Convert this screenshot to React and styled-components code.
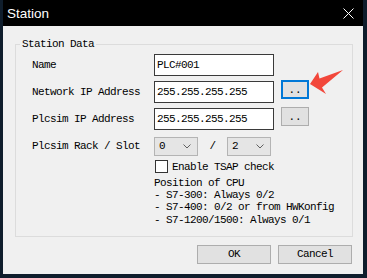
import { Fragment } from "react";
import styled, { createGlobalStyle } from "styled-components";

const GlobalStyle = createGlobalStyle`
  html, body {
    margin: 0;
    padding: 0;
    background: #0f1d2c;
  }
  body {
    width: 367px;
    height: 278px;
    overflow: hidden;
    font-family: "Liberation Mono", "DejaVu Sans Mono", monospace;
    font-size: 11px;
    letter-spacing: -0.6px;
    color: #000;
  }
`;

const Window = styled.div`
  position: relative;
  width: 360px;
  height: 274px;
  margin-left: 3px;
  background: #f0f0f0;
  display: flex;
  flex-direction: column;
`;

const TitleBar = styled.div`
  height: 26px;
  flex: none;
  background: #000;
  color: #fff;
  display: flex;
  align-items: center;
  justify-content: space-between;
  padding: 0 9px 0 4px;
  font-family: "Liberation Sans", Arial, sans-serif;
  font-size: 13.5px;
  letter-spacing: 0;
`;

const Body = styled.div`
  flex: 1;
  padding: 12px 10px 0 12px;
`;

const Group = styled.fieldset`
  margin: 0;
  padding: 0;
  border: 1px solid #dcdcdc;
  min-width: 0;
`;

const Legend = styled.legend`
  margin-left: 4px;
  padding: 0 2px;
  line-height: 12px;
`;

const GroupContent = styled.div`
  padding: 4px 0 10px 16px;
`;

const FormGrid = styled.div`
  display: grid;
  grid-template-columns: 115px 120px 28px;
  grid-auto-rows: 22px;
  column-gap: 7px;
  row-gap: 5px;
`;

const Label = styled.div`
  align-self: center;
  white-space: nowrap;
`;

const TextBox = styled.div`
  box-sizing: border-box;
  height: 22px;
  background: #fff;
  border: 1px solid #3a3a3a;
  padding-left: 2px;
  display: flex;
  align-items: center;
  white-space: nowrap;
`;

const SmallButton = styled.div`
  box-sizing: border-box;
  width: 28px;
  height: 19px;
  align-self: start;
  margin-top: -1px;
  background: #e1e1e1;
  border: ${(p) => (p.$focused ? "2px solid #0078d7" : "1px solid #adadad")};
  display: flex;
  align-items: center;
  justify-content: center;
  letter-spacing: 0;
`;

const ComboRow = styled.div`
  display: flex;
  align-items: center;
`;

const Combo = styled.div`
  box-sizing: border-box;
  width: 44px;
  height: 19px;
  background: #e5e5e5;
  border: 1px solid #b4b4b4;
  display: flex;
  align-items: center;
  justify-content: space-between;
  padding: 0 6px 0 4px;
`;

const Slash = styled.div`
  width: 29px;
  text-align: center;
`;

const Options = styled.div`
  margin: 3px 0 0 122px;
`;

const CheckRow = styled.label`
  display: flex;
  align-items: center;
  gap: 4px;
  height: 13px;
`;

const CheckBox = styled.span`
  box-sizing: border-box;
  width: 13px;
  height: 13px;
  margin-left: 1px;
  background: #fff;
  border: 1px solid #333;
`;

const Note = styled.div`
  margin-top: 4px;
  line-height: 12.2px;
  white-space: pre;
`;

const ButtonBar = styled.div`
  display: flex;
  justify-content: flex-end;
  gap: 7px;
  padding: 8px 1px 0 0;
`;

const DialogButton = styled.div`
  box-sizing: border-box;
  width: 74px;
  height: 19px;
  background: #e1e1e1;
  border: 1px solid #adadad;
  display: flex;
  align-items: center;
  justify-content: center;
`;

const Overlay = styled.svg`
  position: absolute;
  left: 0;
  top: 0;
  pointer-events: none;
`;

function Chevron() {
  return (
    <svg width="8" height="5" viewBox="0 0 8 5">
      <path d="M0.5 0.5 L4 4 L7.5 0.5" fill="none" stroke="#606060" strokeWidth="1" />
    </svg>
  );
}

function CloseIcon() {
  return (
    <svg width="11" height="11" viewBox="0 0 11 11">
      <path d="M0.5 0.5 L10.5 10.5 M10.5 0.5 L0.5 10.5" stroke="#fff" strokeWidth="1" />
    </svg>
  );
}

const fields = [
  { label: "Name", value: "PLC#001" },
  { label: "Network IP Address", value: "255.255.255.255", button: true, focused: true },
  { label: "Plcsim IP Address", value: "255.255.255.255", button: true },
];

const notes = [
  "Position of CPU",
  "- S7-300: Always 0/2",
  "- S7-400: 0/2 or from HWKonfig",
  "- S7-1200/1500: Always 0/1",
];

export default function App() {
  return (
    <>
      <GlobalStyle />
      <Window>
        <TitleBar>
          <span>Station</span>
          <CloseIcon />
        </TitleBar>
        <Body>
          <Group>
            <Legend>Station Data</Legend>
            <GroupContent>
              <FormGrid>
                {fields.map((f) => (
                  <Fragment key={f.label}>
                    <Label>{f.label}</Label>
                    <TextBox>{f.value}</TextBox>
                    {f.button ? <SmallButton $focused={f.focused}>..</SmallButton> : <span />}
                  </Fragment>
                ))}
                <Label>Plcsim Rack / Slot</Label>
                <ComboRow>
                  <Combo>
                    <span>0</span>
                    <Chevron />
                  </Combo>
                  <Slash>/</Slash>
                  <Combo>
                    <span>2</span>
                    <Chevron />
                  </Combo>
                </ComboRow>
              </FormGrid>
              <Options>
                <CheckRow>
                  <CheckBox />
                  Enable TSAP check
                </CheckRow>
                <Note>{notes.join("\n")}</Note>
              </Options>
            </GroupContent>
          </Group>
          <ButtonBar>
            <DialogButton>OK</DialogButton>
            <DialogButton>Cancel</DialogButton>
          </ButtonBar>
        </Body>
        <Overlay width="360" height="274" viewBox="3 0 360 274">
          <polygon
            points="310,84 318,72 319.5,78.5 343,70 322,87.5 326,94"
            fill="#f2473b"
          />
        </Overlay>
      </Window>
    </>
  );
}
